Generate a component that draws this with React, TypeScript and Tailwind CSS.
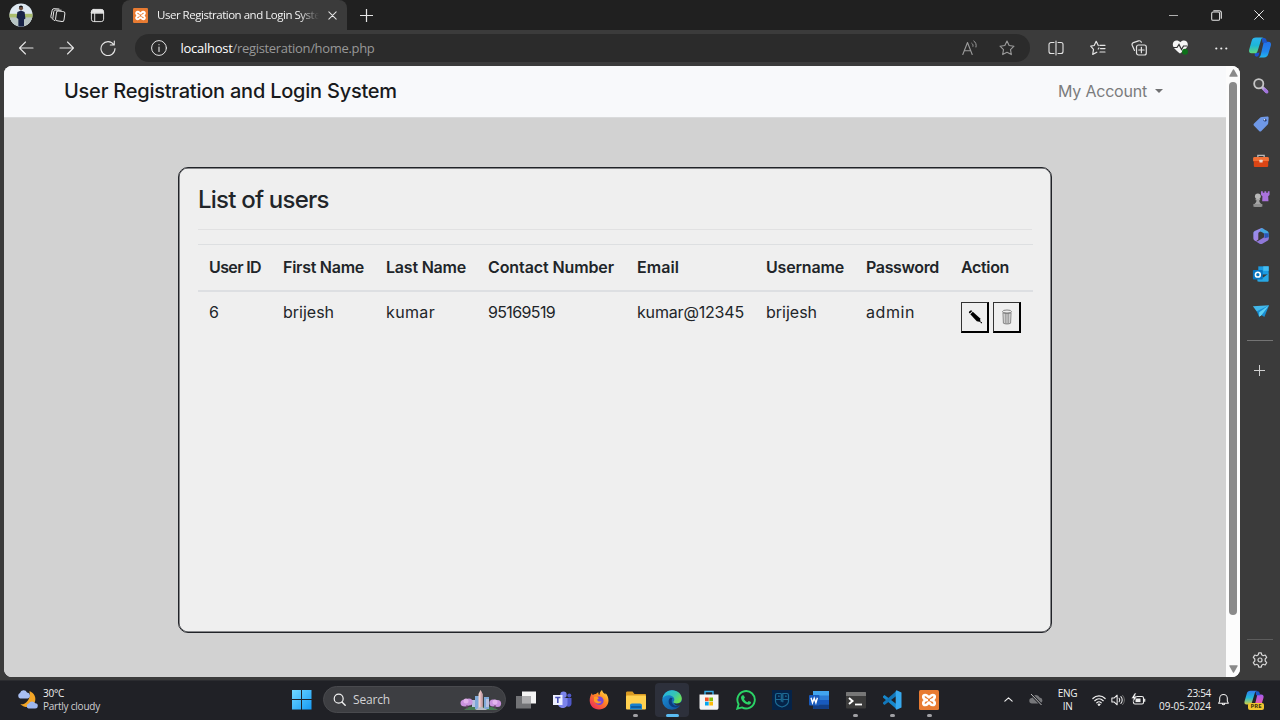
import React from "react";

type SvgProps = { children: React.ReactNode; className?: string; box?: string };

/* Outline glyph drawn on a 16x16 grid */
function Line({ children, className = "size-4", box = "0 0 16 16" }: SvgProps) {
  return (
    <svg viewBox={box} className={`shrink-0 ${className}`} fill="none" stroke="currentColor" strokeWidth="1" strokeLinecap="round" strokeLinejoin="round">
      {children}
    </svg>
  );
}

/* Filled, coloured glyph drawn on a 20x20 grid */
function Art({ children, className = "size-5", box = "0 0 20 20" }: SvgProps) {
  return (
    <svg viewBox={box} className={`shrink-0 ${className}`}>
      {children}
    </svg>
  );
}

function Xampp({ className }: { className: string }) {
  return (
    <Art className={className}>
      <rect width="20" height="20" rx="1.5" fill="#e87b32" />
      <g fill="none" stroke="#fff" strokeWidth="2.7" strokeLinecap="round" strokeLinejoin="round">
        <path d="M7.800 10C3.800 9.500 3 5 6.400 5C8.400 5 9 7.300 10 7.300S11.600 5 13.600 5C17 5 16.200 9.500 12.200 10C16.200 10.500 17 15 13.600 15C11.600 15 11 12.700 10 12.700S8.400 15 6.400 15C3 15 3.800 10.500 7.800 10" />
      </g>
    </Art>
  );
}

function Copilot({ className, warm = false }: { className: string; warm?: boolean }) {
  const a = warm ? "cpw" : "cpb";
  return (
    <Art className={className} box="0 0 24 22">
      <defs>
        <linearGradient id={`${a}l`} x1="0" y1="0" x2="0" y2="1">
          <stop offset="0" stopColor={warm ? "#2f7df0" : "#2db4ee"} />
          <stop offset=".5" stopColor={warm ? "#22b8d8" : "#1cb6d8"} />
          <stop offset="1" stopColor={warm ? "#d5cf3c" : "#5fd77c"} />
        </linearGradient>
        <linearGradient id={`${a}r`} x1="0" y1="0" x2="0" y2="1">
          <stop offset="0" stopColor={warm ? "#a55cf0" : "#2470e8"} />
          <stop offset=".6" stopColor={warm ? "#e35bb0" : "#2185ec"} />
          <stop offset="1" stopColor={warm ? "#f07b62" : "#22b6ee"} />
        </linearGradient>
      </defs>
      <path d="M16 5h4.500c2.500 0 3.500 1.500 2.900 3.900l-2.700 9c-.7 2.300-2 3.600-4.600 3.600H9.500c2 0 2.700-1.300 3.300-3z" fill={`url(#${a}r)`} />
      <path d="M6.500 16.500h5l-1 3c-.6 1.600-3.300 1.600-4 0z" fill="#1b4fd0" />
      <path d="M14 1h2.500c1.400 0 1.900 1 2.300 2.400L19.500 6h-5z" fill="#1d55c8" />
      <path d="M7.800.5H16c-1.800 0-2.500 1.200-3 2.800l-3.400 11C9 16 8.300 17 6.500 17H3.200C.8 17 .1 15.300.7 13l2.600-9C4 1.600 5.300.5 7.800.5z" fill={`url(#${a}l)`} />
    </Art>
  );
}

function TabStrip() {
  return (
    <div className="flex h-[30px] items-stretch bg-[#202020] text-[#e6e6e6]">
      <div className="flex w-[122px] items-center pl-[9px]">
        <Art className="size-6">
          <defs>
            <clipPath id="av"><circle cx="10" cy="10" r="9.600" /></clipPath>
          </defs>
          <g clipPath="url(#av)">
            <rect width="20" height="20" fill="#dde8f1" />
            <rect y="9" width="20" height="5" fill="#a9bd6d" />
            <rect y="12" width="20" height="8" fill="#b8c5c4" />
            <path d="M7 7.500l3-1.200 3 1.200.7 5.500-1.200.7V20H7.800v-6.500L6.300 12z" fill="#172347" />
            <circle cx="10" cy="4.300" r="1.700" fill="#70503f" />
            <path d="M8.300 4c0-2.500 3.400-2.500 3.400 0-1-.9-2.400-.9-3.400 0z" fill="#17171b" />
          </g>
        </Art>
        <Line className="ml-[17px] size-4">
          <rect x="6" y="4.200" width="8.500" height="10" rx="1.800" transform="rotate(8 10 9)" />
          <path d="M4.600 13.500l-1.100-.6c-.7-.4-.8-.9-.7-1.500l1-6.800c.2-1 .8-1.500 1.700-1.500l5.700.1" />
          <path d="M2.200 11.500l-.8-.6c-.6-.5-.7-1-.5-1.600l1.300-6.200c.2-.9.900-1.400 1.800-1.400l5 .3" />
        </Line>
        <Line className="ml-[24px] size-[15px]">
          <rect x="1.500" y="1.500" width="13" height="13" rx="2.500" />
          <path d="M1.500 5.500h13M5 5.500v9" />
          <path d="M3 2h10.500L14.500 5H1.500z" fill="currentColor" />
        </Line>
      </div>
      <div className="flex w-[225px] items-center rounded-t-lg bg-[#3b3b3b] pl-[11px]">
        <Xampp className="size-[15px]" />
        <div className="ml-[9px] w-[162px] overflow-hidden font-['Open_Sans',sans-serif] text-[11.500px] tracking-[-0.480px] whitespace-nowrap text-[#f2f2f2] [mask-image:linear-gradient(90deg,#000_88%,transparent)]">
          User Registration and Login System
        </div>
        <Line className="ml-[9px] size-[9px]">
          <path d="M1.500 1.500l13 13M14.500 1.500l-13 13" strokeWidth="1.800" />
        </Line>
      </div>
      <div className="flex flex-1 items-center pl-[13px]">
        <Line className="size-[13px]">
          <path d="M8 0v16M0 8h16" strokeWidth="1.500" />
        </Line>
      </div>
      <div className="flex items-center pr-[16px]">
        <Line className="size-[9px]"><path d="M0 8h16" strokeWidth="1.300" /></Line>
        <Line className="ml-[33px] size-[11px]">
          <rect x="1" y="3" width="11.500" height="12" rx="2" strokeWidth="1.500" />
          <path d="M4 1h8c2 0 3 1 3 3v8" strokeWidth="1.600" />
        </Line>
        <Line className="ml-[32px] size-[10px]"><path d="M1 1l14 14M15 1L1 15" strokeWidth="1.600" /></Line>
      </div>
    </div>
  );
}

function Toolbar() {
  return (
    <div className="flex h-9 shrink-0 items-center pb-px text-[#e4e4e4]">
      <div className="flex w-[135px] items-center pl-[18px]">
        <Line className="size-4"><path d="M15 8H1.500M7.500 2L1.500 8l6 6" strokeWidth="1.100" /></Line>
        <Line className="ml-[25px] size-4"><path d="M1 8h13.500M8.500 2l6 6-6 6" strokeWidth="1.100" /></Line>
        <Line className="ml-[25px] size-4">
          <path d="M13.800 4.700A7 7 0 1 0 15 8.600M14.300 1v4h-4" strokeWidth="1.100" />
        </Line>
      </div>
      <div className="flex h-7 w-[895px] items-center rounded-full bg-[#2b2b2b] pr-[15px] pl-4">
        <Line className="size-4">
          <circle cx="8" cy="8" r="7.400" />
          <path d="M8 7v4.500M8 4.500v.2" strokeWidth="1.100" />
        </Line>
        <div className="ml-[13.500px] font-['Open_Sans',sans-serif] text-[13px] leading-5 whitespace-nowrap">
          <span className="tracking-[-0.270px] text-white">localhost</span>
          <span className="tracking-[-0.320px] text-[#989898]">/registeration/home.php</span>
        </div>
        <div className="ml-auto flex items-center text-[#9b9b9b]">
          <Line className="size-4">
            <path d="M.8 14.500L5.500 2.500l4.700 12M2.300 10.800h6.400" strokeWidth="1.100" />
            <path d="M9.800 3.300c1 .7 1.400 1.800 1.200 3M11.800 1c2 1.300 2.800 3.500 2.200 6" />
          </Line>
          <Line className="ml-[21px] size-4">
            <path d="M8 1l2.150 4.500 4.850.7-3.500 3.450.85 4.950L8 12.250 3.650 14.600l.85-4.950L1 6.200l4.850-.7z" strokeWidth="1.100" />
          </Line>
        </div>
      </div>
      <div className="flex items-center pl-[18px]">
        <Line className="size-4">
          <path d="M6 2.500H3A2 2 0 0 0 1 4.500v7a2 2 0 0 0 2 2h3M10 2.500h3a2 2 0 0 1 2 2v7a2 2 0 0 1-2 2h-3M8 1v14" strokeWidth="1.100" />
        </Line>
        <Line className="ml-[26px] size-4">
          <path d="M9.800 5.300H15M10.500 8.600H15M10 12h5" strokeWidth="1.200" />
          <path d="M8.300 5.500L6.200 1.300 4.200 5.500.7 6.200l2.800 3.200-.8 5 4.100-2.200M8.200 9l.7-1" strokeWidth="1.200" />
        </Line>
        <Line className="ml-[25px] size-4">
          <rect x="5.500" y="5" width="9.800" height="10" rx="2" strokeWidth="1.200" />
          <path d="M10.400 7.300v5.400M7.700 10h5.400" strokeWidth="1.200" />
          <path d="M3.500 10.500L1.200 5.200C.8 4 1.300 3 2.300 2.600L7.500.9c1.300-.4 2.400.1 2.900 1.300" strokeWidth="1.200" />
        </Line>
        <Art className="ml-[25px] size-[17px]" box="0 0 17 17">
          <path d="M8 14.500C3.500 11 .8 8.500.8 5.300.8 1 6 .3 8.300 3.300 10.500.3 15.800 1 15.800 5.300c0 3.200-3 5.700-7.800 9.200z" fill="#f5f5f5" />
          <path d="M1 8.500h4l2-3 2.500 5 2-3.500h3.500" fill="none" stroke="#333" strokeWidth="1.200" />
          <circle cx="13" cy="12.800" r="3" fill="#0d701a" />
        </Art>
        <Art className="ml-[26px] h-4 w-[14px]" box="0 0 14 16">
          <circle cx="1.300" cy="8.500" r="1.100" fill="#eee" />
          <circle cx="6.300" cy="8.500" r="1.100" fill="#eee" />
          <circle cx="11.300" cy="8.500" r="1.100" fill="#eee" />
        </Art>
      </div>
    </div>
  );
}

function UsersPage() {
  return (
    <div className="ml-1 flex h-[611px] overflow-hidden rounded-lg bg-white">
      <div className="flex w-[1222px] flex-col bg-[#d2d2d2] font-['Inter',sans-serif]">
        <header className="flex h-[52px] items-center border-b border-[#dadbdc] bg-[#f8f9fb] pr-[63px] pb-[2px] pl-[60px]">
          <div className="text-[20px] font-[450] tracking-[-0.230px] text-[#181a1c]">User Registration and Login System</div>
          <div className="ml-auto flex items-center text-[16px] tracking-[-0.210px] text-[#7b7c7d]">
            My Account
            <svg viewBox="0 0 8 4" className="ml-2 h-1 w-2 fill-[#707172]"><path d="M0 0h8L4 4z" /></svg>
          </div>
        </header>
        <main className="mt-[49px] ml-[174px] h-[466px] w-[874px] rounded-[10px] border border-[#212328] bg-[#efefef] px-[19px] pt-[16px] text-[#212529] shadow-[inset_0_0_0_0.5px_#212328]">
          <h1 className="h-[46px] border-b border-[#e1e1e2] text-[24px] leading-8 font-[450] tracking-[-0.780px]">List of users</h1>
          <table className="mt-[14px] w-[835px] table-fixed border-collapse text-left text-[16px] leading-6">
            <colgroup>
              <col className="w-[74px]" />
              <col className="w-[103px]" />
              <col className="w-[102px]" />
              <col className="w-[149px]" />
              <col className="w-[129px]" />
              <col className="w-[100px]" />
              <col className="w-[95px]" />
              <col className="w-[83px]" />
            </colgroup>
            <thead>
              <tr className="h-[46px] border-t border-b-2 border-t-[#dddfe1] border-b-[#dddfe2] whitespace-nowrap [&>th]:pl-[11px] [&>th]:font-semibold">
                <th className="tracking-[-0.620px]">User ID</th>
                <th className="tracking-[-0.260px]">First Name</th>
                <th className="tracking-[-0.210px]">Last Name</th>
                <th className="tracking-[-0.100px]">Contact Number</th>
                <th className="tracking-[0.050px]">Email</th>
                <th className="tracking-[-0.170px]">Username</th>
                <th className="tracking-[-0.360px]">Password</th>
                <th className="tracking-[-0.350px]">Action</th>
              </tr>
            </thead>
            <tbody>
              <tr className="align-top whitespace-nowrap [&>td]:pt-[8px] [&>td]:pl-[11px]">
                <td>6</td>
                <td>brijesh</td>
                <td className="tracking-[0.350px]">kumar</td>
                <td className="tracking-[-0.640px]">95169519</td>
                <td className="tracking-[-0.170px]">kumar@12345</td>
                <td>brijesh</td>
                <td className="tracking-[0.570px]">admin</td>
                <td>
                  <div className="flex gap-1 pt-[2px]">
                    <button className="flex h-[31px] w-7 items-center justify-center border-t border-r-2 border-b-2 border-l border-t-[#333] border-r-black border-b-black border-l-[#333]">
                      <svg viewBox="0 0 16 16" className="size-4">
                        <path d="M2.200 2.600L4 1.200l1.300.9-2.500 2.500-1-1z" />
                        <path d="M5.800 2.700l7.200 6.500.5 3.800-3.700-.8L3.300 5.300z" />
                        <path d="M13 12.500l1 1.700h1v-1z" />
                      </svg>
                    </button>
                    <button className="flex h-[31px] w-7 items-center justify-center border-t border-r-2 border-b-2 border-l border-t-[#333] border-r-black border-b-black border-l-[#333]">
                      <svg viewBox="0 0 12 16" className="h-4 w-3" fill="none" stroke="#777" strokeWidth=".9">
                        <ellipse cx="6" cy="2.500" rx="4.400" ry="1.500" />
                        <path d="M1.600 3.500c1 1.500 7.800 1.500 8.800 0M2 4l.4 10.200c1.500 1 5.700 1 7.200 0L10 4M4.200 5v9.500M6 5v9.800M7.800 5v9.500" />
                      </svg>
                    </button>
                  </div>
                </td>
              </tr>
            </tbody>
          </table>
        </main>
      </div>
      <div className="flex w-[14px] flex-col items-center bg-[#fcfcfc] pt-[3px]">
        <svg viewBox="0 0 9 8" className="h-2 w-[9px] fill-[#8a8a8a]"><path d="M4 .6q.5-.6 1 0l3.700 6.400q.2.700-.6.700H.9Q.1 7.700.3 7z" /></svg>
        <div className="mt-[5px] h-[533px] w-2 rounded-full bg-[#8a8a8a]" />
        <svg viewBox="0 0 9 8" className="mt-auto mb-[4px] h-2 w-[9px] fill-[#8a8a8a]"><path d="M4 7.400q.5.600 1 0L8.700 1q.2-.700-.6-.700H.9Q.1.300.3 1z" /></svg>
      </div>
    </div>
  );
}

function Sidebar() {
  return (
    <aside className="flex w-10 flex-col items-center bg-[#3b3b3b] text-[#d6d6d6]">
      <Copilot className="mt-[7px] h-[21px] w-6" />
      <div className="mt-[19px] ml-px flex flex-col items-center gap-[19.500px]">
        <Art className="size-[18px]">
          <path d="M12 12l4 4" stroke="#b9a4dd" strokeWidth="3.600" strokeLinecap="round" />
          <circle cx="7.500" cy="7.500" r="5.100" fill="#4a4a4a" stroke="#c6c6c6" strokeWidth="2" />
          <path d="M14.500 14.500l2 2" stroke="#a274dd" strokeWidth="3.600" strokeLinecap="round" />
        </Art>
        <Art className="size-[18px]">
          <path d="M10.800 2.200l6.200-.5c1 0 1.500.6 1.500 1.500L18 9.200c0 .7-.3 1.200-.8 1.700L10.400 17.700c-.8.8-1.700.8-2.500 0L2.300 12c-.8-.8-.8-1.700 0-2.500l6.900-6.700c.5-.4 1-.6 1.600-.6z" fill="#6f98e6" />
          <circle cx="14.500" cy="5.700" r="1.600" fill="#20356c" />
          <circle cx="14" cy="5.200" r=".8" fill="#fff" />
        </Art>
        <Art className="size-[18px]">
          <path d="M6.500 6V3.800h7V6" fill="none" stroke="#b9b9b9" strokeWidth="1.500" />
          <rect x="1.200" y="5.500" width="17.600" height="5.200" rx="1.500" fill="#f37036" />
          <path d="M2 10h16v5c0 1.200-.6 1.800-1.800 1.800H3.800C2.600 16.800 2 16.200 2 15z" fill="#da4515" />
          <rect x="8.200" y="8.700" width="3.600" height="3" rx=".6" fill="#e9d5cb" />
        </Art>
        <Art className="size-[18px]">
          <path d="M10 1.500h2v1.500h1.800V1.500h2V3h1.800V1.500h1.900v4l-1.500 1.500.3 5.500h-7L11.600 7 10 5.500z" fill="#aa72dc" />
          <circle cx="6.500" cy="7" r="3.200" fill="#b7b7b7" />
          <path d="M4 10h5v1.500H8c0 2 1 3 2.500 4.500v2.500h-8V16C4 14.500 5 13.500 5 11.500H4z" fill="#a5a5a5" />
          <path d="M1.500 15.500h10v3h-10z" fill="#8f8f8f" />
        </Art>
        <Art className="size-[18px]">
          <defs>
            <linearGradient id="m365" x1="0" y1="0" x2="1" y2="1"><stop stopColor="#8b95f2" /><stop offset="1" stopColor="#b575d9" /></linearGradient>
          </defs>
          <path d="M10.500 1L3 4.500C2 5 1.500 6 1.500 7v5.500c0 1.500 1 2.500 3 3.300L7 14V7.500c0-1 .5-1.800 1.500-2.300L14 2.500z" fill="url(#m365)" />
          <path d="M10.500 1l6.500 3.500c1 .5 1.500 1.300 1.500 2.500v6l-5-2.500V8.300c0-1-.5-1.500-1.300-2L8.500 4.500z" fill="#42a6df" />
          <path d="M18.500 11v2c0 1-.5 1.800-1.400 2.300L11.500 18.500c-1 .5-2 .5-3 0l-4.500-2.700c2 .3 3-.3 4-1l5.500-3.300V8z" fill="#8f78d8" />
          <path d="M13.500 7l5 0v4.500L14 12.500z" fill="#2b56b5" />
        </Art>
        <Art className="size-[18px]">
          <rect x="7" y="1.500" width="11.500" height="9" fill="#1b9be2" />
          <path d="M12.500 1.500h6v5h-6z" fill="#45bdf1" />
          <path d="M6 9l6.500 5 6-4.500v8c0 .7-.4 1-1 1H7.500c-1 0-1.500-.4-1.500-1z" fill="#27a7e4" />
          <rect x="1" y="5.500" width="11" height="10.500" rx="1" fill="#0874bf" />
          <circle cx="6.500" cy="10.700" r="2.700" fill="none" stroke="#fff" strokeWidth="1.700" />
        </Art>
        <Art className="size-[18px]">
          <path d="M1 4.800L19 3.500l-7.500 6L5.300 10.500z" fill="#42b8ea" />
          <path d="M5.300 10.200L19 3.500l-5.300 13.300-3.200-2.300-2.700 2z" fill="#198ed2" />
          <path d="M8 11.500l11-8-8.500 11.200L7.800 16.500z" fill="#5ed0f3" />
        </Art>
      </div>
      <div className="mt-[20px] h-px w-[26px] bg-[#747474]" />
      <Line className="mt-[24px] mr-px size-[11px]"><path d="M8 .5v15M.5 8h15" strokeWidth="1.400" /></Line>
      <div className="mt-auto h-px w-[26px] bg-[#5d5d5d]" />
      <Line className="mt-[12px] mb-[12px] size-4">
        <path d="M6.700.8h2.600l.4 2 1.500.9 2-.7 1.500 2.400L13.200 7v2l1.500 1.600-1.500 2.400-2-.7-1.500.9-.4 2H6.700l-.4-2-1.500-.9-2 .7-1.500-2.400L2.800 9V7L1.300 5.400 2.800 3l2 .7 1.500-.9z" strokeWidth="1.200" />
        <circle cx="8" cy="8" r="2" strokeWidth="1.200" />
      </Line>
    </aside>
  );
}

function TaskCell({ children, mark = "none" }: { children: React.ReactNode; mark?: "none" | "open" | "active" }) {
  return (
    <div className="flex w-[36.670px] justify-center">
      <div className={mark === "active" ? "flex h-[34px] w-[34px] flex-col items-center rounded bg-[#2d303b] pt-[7px]" : "flex h-[34px] w-[34px] flex-col items-center pt-[7px]"}>
        {children}
        {mark === "open" && <div className="mt-[4px] h-[3px] w-[5px] shrink-0 rounded-full bg-[#a0a0a4]" />}
        {mark === "active" && <div className="mt-[4px] h-[3px] w-[13px] shrink-0 rounded-full bg-[#5bbcf3]" />}
      </div>
    </div>
  );
}

function Taskbar() {
  return (
    <footer className="flex h-10 items-center border-t border-[#2b2c30] bg-[#202126] pb-[2px] font-['Open_Sans',sans-serif] text-[10px] leading-[13px] text-[#f1f1f1]">
      <div className="flex w-[291px] items-center pl-4">
        <Art className="size-[22px]" box="0 0 22 22">
          <path d="M13.500 2c5 2 7 7 5.300 11-2 5-8.500 7.300-14.500 2.300C9.500 16 15 11 13.500 2z" fill="#f2a526" />
          <path d="M4 9.500a3 3 0 0 1 0-5.500 3.700 3.700 0 0 1 7-.4 3 3 0 0 1 .7 5.900z" fill="#a9bff2" />
          <path d="M12.500 19.500a2.600 2.600 0 0 1 .3-5 3.700 3.700 0 0 1 6.500-.2 2.600 2.600 0 0 1-.2 5.200z" fill="#9eb7ef" />
        </Art>
        <div className="ml-[5px] whitespace-nowrap">
          <div className="tracking-[-0.250px]">30°C</div>
          <div className="tracking-[-0.230px] text-[#d0d0d2]">Partly cloudy</div>
        </div>
      </div>
      <Art className="size-[21px]" box="0 0 21 21">
        <defs>
          <linearGradient id="win" x1="0" y1="0" x2="1" y2="1"><stop stopColor="#72d8ff" /><stop offset="1" stopColor="#149af4" /></linearGradient>
        </defs>
        <path d="M1 1h9v9H1zM11 1h9.500v9H11zM1 11h9v9.500H1zM11 11h9.500v9.500H11z" fill="url(#win)" />
      </Art>
      <div className="ml-[11px] flex h-[27px] w-[183px] items-center rounded-full border border-[#494a4e] bg-[#3d3e42] pl-[9px]">
        <Line className="size-[13px]"><circle cx="7" cy="7" r="5.500" strokeWidth="1.500" /><path d="M11 11l4 4" strokeWidth="1.700" /></Line>
        <div className="ml-[7px] text-[12px] leading-4 tracking-[-0.170px] text-[#d3d3d5]">Search</div>
        <Art className="mr-[3px] ml-auto h-[22px] w-[42px]" box="0 0 42 22">
          <path d="M4 21c5-5 12-3 16-3s12-2 18 3z" fill="#467a50" />
          <path d="M15 20V7h4v13zM24 20V8h5v12z" fill="#7fa9d8" />
          <path d="M26 10h3v8h-3zM12 11h3v7h-3z" fill="#b8c1e0" />
          <path d="M18.500 20V5l2-4 2 4v15z" fill="#f0d2cd" />
          <path d="M20.500 1l2 4v15h-2z" fill="#cfa3ac" />
          <path d="M15 21l5-3h1.500l6 3z" fill="#b8bcc5" />
          <g fill="#c993dd"><ellipse cx="5" cy="14" rx="4.500" ry="3.500" /><circle cx="9" cy="13" r="3.600" /><circle cx="33" cy="14" r="3.600" /><circle cx="37.500" cy="14.500" r="3.600" /></g>
          <g fill="#e2b4ec"><circle cx="6" cy="12" r="2.500" /><circle cx="35" cy="13" r="2.500" /></g>
          <path d="M7 16v4M35 16v4" stroke="#664263" strokeWidth="1" />
        </Art>
      </div>
      <div className="ml-[1.500px] flex h-[34px] w-[440px]">
        <TaskCell>
          <Art>
            <rect x="6" y="1.500" width="14.500" height="12" fill="#f4f4f4" />
            <rect x="0" y="6" width="15" height="12.500" fill="#7b7c7f" opacity=".9" />
            <rect x="6" y="6" width="9" height="7.500" fill="#aeaeb0" />
          </Art>
        </TaskCell>
        <TaskCell>
          <Art>
            <circle cx="11.500" cy="4.700" r="3.200" fill="#7b83eb" /><circle cx="17.300" cy="5.500" r="2" fill="#5059c9" />
            <path d="M14.500 8h5v6a3 3 0 0 1-5 2z" fill="#5059c9" /><path d="M6 8h9.500v5.500c0 6-9.500 6-9.500 0z" fill="#7b83eb" />
            <rect x="1" y="5" width="9.500" height="10" fill="#eef0ff" /><path d="M3.200 7.500h5.200M5.800 7.500v5.500" stroke="#4850b5" strokeWidth="1.600" />
          </Art>
        </TaskCell>
        <TaskCell>
          <Art>
            <defs><linearGradient id="fx" x1="1" y1="0" x2=".2" y2="1"><stop stopColor="#fff04d" /><stop offset=".45" stopColor="#ff8a22" /><stop offset="1" stopColor="#ed275b" /></linearGradient></defs>
            <path d="M3 3c0 1 .3 1.600.8 2C4.800 4.200 6 3.900 7 4c.5-.8 1.500-1.500 2.500-1.500-.3 1.500 0 2 1 2.500C10.500 3 11.500 1 13 0c.5 2.500 2 3 3.500 4.500 0-.7 0-1-.2-1.500C18.500 5 19.500 7.700 19.500 10.500c0 5-4 9-9.500 9s-9.300-4-9.300-9C.7 7.500 1.700 5 3 3z" fill="url(#fx)" />
            <circle cx="10.300" cy="10.800" r="4.300" fill="#7646d8" /><path d="M5 7c2-1 4 0 5 1.500-1.500.3-2 1-1.500 2 .6 1.200 2.500 1.200 4 .7-1 3-6 3-7.500-.2z" fill="#ff9c25" />
          </Art>
        </TaskCell>
        <TaskCell mark="open">
          <Art>
            <path d="M0 3c0-1 .5-1.500 1.500-1.500h5l2 2.500H19c.7 0 1 .4 1 1v5H0z" fill="#d99a23" />
            <rect y="5.500" width="20" height="14" rx="1" fill="#ffd150" />
            <path d="M4 19.500v-4c0-1.200.8-2 2-2h8c1.200 0 2 .8 2 2v4z" fill="#1780cf" /><path d="M5 17h10" stroke="#0a4d8b" strokeWidth="1.400" />
          </Art>
        </TaskCell>
        <TaskCell mark="active">
          <Art>
            <defs>
              <linearGradient id="eg" x1="0" y1="0" x2="1" y2=".6"><stop stopColor="#23b3e8" /><stop offset=".6" stopColor="#36c5b4" /><stop offset="1" stopColor="#6fe052" /></linearGradient>
              <linearGradient id="eb" x1="0" y1="0" x2="1" y2="1"><stop stopColor="#1b98df" /><stop offset="1" stopColor="#114a93" /></linearGradient>
            </defs>
            <circle cx="10" cy="10" r="9.800" fill="url(#eb)" />
            <path d="M.5 8.500C2 3 5.500.2 10 .2c5.700 0 9.800 4 9.800 8.300 0 3-2.300 5-5.300 5-2 0-3.200-.7-3.200-1.400 0-.5 1-.9 1-2.500C12.300 7 9.500 5.300 6.500 5.300 3.500 5.300 1.500 7 .5 8.500z" fill="url(#eg)" />
            <path d="M8.200 7.800c-3 3-1.500 8.500 3.500 9.500 2.500.4 5-.4 6.500-2-4 2.200-8.700-.3-8.500-4.500 0-1.100.5-1.800 1-2.200-.7-.9-1.600-1.200-2.500-.8z" fill="#0c3b7d" />
            <path d="M12 13c1.500 1.200 5 1 8-1.500v3l-2 1c-3 .6-5.400-.5-6-2.500z" fill="#2d303b" />
          </Art>
        </TaskCell>
        <TaskCell>
          <Art>
            <path d="M6 5V1.500h8V5" fill="none" stroke="#36aeea" strokeWidth="1.400" />
            <path d="M.5 4.500h19v13c0 1.500-.7 2.300-2.200 2.300H2.700C1.200 19.800.5 19 .5 17.500z" fill="#f4f4f4" />
            <path d="M6 7.500h3.700v3.700H6z" fill="#f35325" /><path d="M10.300 7.500H14v3.700h-3.700z" fill="#81bc06" /><path d="M6 11.800h3.700v3.700H6z" fill="#05a6f0" /><path d="M10.300 11.800H14v3.700h-3.700z" fill="#ffba08" />
          </Art>
        </TaskCell>
        <TaskCell>
          <Art>
            <path d="M1.300 18.700l1.300-4.500a8.700 8.700 0 1 1 3.300 3.200z" fill="none" stroke="#2bd366" strokeWidth="1.900" />
            <path d="M6.800 5.200l1.100.2 1 2.300-1 1.300c1 1.700 2 2.500 3.600 3.200l1.200-1.300 2.300 1.100c.1 2-1.500 2.800-3 2.600C8.500 14 5.500 11 5 8c-.1-1.200.7-2.600 1.800-2.800z" fill="#2bd366" />
          </Art>
        </TaskCell>
        <TaskCell>
          <Art>
            <rect width="20" height="20" fill="#052348" />
            <path d="M9.300 3.500H5.200C4 3.500 3.500 4 3.500 5.200v6C3.500 14 6 15.800 10 17c4-1.200 6.500-3 6.500-5.800v-6c0-1.200-.5-1.700-1.700-1.700h-4v8.800M9.300 3.500v8.200M3.700 9.500h5.500M11 9.500h5.500M6 6h1v1M13 6h1v1" fill="none" stroke="#1d6b94" strokeWidth="1.200" />
          </Art>
        </TaskCell>
        <TaskCell>
          <Art>
            <rect x="4" y="1" width="16" height="18" rx="1" fill="#2b7cd3" />
            <path d="M4 1h16v4.500H4z" fill="#41a5ee" /><path d="M4 10h16v4.500H4z" fill="#185abd" /><path d="M4 14.500h16V18c0 .7-.3 1-1 1H5c-.7 0-1-.3-1-1z" fill="#123f86" />
            <rect y="5" width="10.500" height="10.500" rx="1" fill="#185abd" />
            <path d="M2 7.800l1.500 5 1.700-4.500 1.700 4.500 1.500-5" fill="none" stroke="#fff" strokeWidth="1.400" />
          </Art>
        </TaskCell>
        <TaskCell mark="open">
          <Art>
            <rect y="2" width="20" height="16.500" rx="1" fill="#3b3b3b" /><path d="M0 6V3c0-.7.3-1 1-1h18c.7 0 1 .3 1 1v3z" fill="#777" />
            <path d="M3 8l3.500 3L3 14" fill="none" stroke="#fff" strokeWidth="2" /><path d="M9 14.500h7" stroke="#fff" strokeWidth="1.800" />
          </Art>
        </TaskCell>
        <TaskCell mark="open">
          <Art>
            <path d="M1 6.200l1.500-1.300L15 14.500V19.500L1 7.500z" fill="#1688cc" /><path d="M1 13.800l1.500 1.300L15 5.500V.5L1 12.500z" fill="#1277ba" />
            <path d="M14.500.3L19.500 2.500v15l-5 2.200-.8-1V1.500z" fill="#37a9ee" />
          </Art>
        </TaskCell>
        <TaskCell mark="open"><Xampp className="size-5" /></TaskCell>
      </div>
      <div className="ml-[56px] flex flex-1 items-center">
        <Line className="size-[9px]"><path d="M1.500 11L8 5l6.500 6" strokeWidth="2" /></Line>
        <Art className="ml-[16px] h-[13px] w-[14px]" box="0 0 14 13">
          <path d="M3 10.500a2.700 2.700 0 0 1 0-5.400 4 4 0 0 1 7.600-.5 3 3 0 0 1 .6 5.900z" fill="#76777a" /><path d="M2 1l10.500 11" stroke="#202126" strokeWidth="2.600" /><path d="M2 1l10.500 11" stroke="#bbb" strokeWidth="1" />
        </Art>
        <div className="ml-[10px] w-[30px] text-center tracking-[-0.350px]"><div>ENG</div><div>IN</div></div>
        <Line className="ml-[9px] size-[14px]">
          <path d="M1 6.300c4-4 10-4 14 0M3.200 8.800c2.800-2.800 6.800-2.800 9.600 0M5.500 11.200c1.500-1.500 3.500-1.500 5 0" strokeWidth="1.400" /><circle cx="8" cy="13.300" r="1" fill="currentColor" />
        </Line>
        <Line className="ml-[5px] size-[14px]">
          <path d="M1 5.800h2.500L7 2.500v11l-3.500-3.300H1z" strokeWidth="1.200" /><path d="M9.300 6c1 1.200 1 2.800 0 4M11.300 4.200c2 2 2 5.600 0 7.600" strokeWidth="1.200" /><path d="M13.300 2.800c2.700 3 2.700 7.400 0 10.400" stroke="#777" strokeWidth="1.100" />
        </Line>
        <Art className="ml-[6px] h-[13px] w-[15px]" box="0 0 15 13">
          <rect x="2.500" y="3.500" width="10" height="7.500" rx="1.500" fill="none" stroke="#eee" strokeWidth="1.100" /><path d="M4.500 5.500h5v3.600h-5z" fill="#eee" /><path d="M13.700 5.800v3" stroke="#eee" strokeWidth="1.200" />
          <path d="M3.700 0L.3 5.500h2.500L1.500 9.500 6 4H3.600L5.300 0z" fill="#fff" stroke="#202126" strokeWidth=".5" />
        </Art>
        <div className="ml-auto text-right"><div className="tracking-[-0.300px]">23:54</div><div className="tracking-[-0.020px]">09-05-2024</div></div>
        <Line className="ml-[6px] size-[13px]">
          <path d="M2 12.500L3.300 10V6.500a4.700 4.700 0 0 1 9.400 0V10l1.300 2.500zM6.300 12.700c0 2.500 3.400 2.500 3.400 0" strokeWidth="1.300" />
        </Line>
        <div className="relative mr-[16px] ml-[14px] h-[20px] w-5">
          <Copilot className="h-[19px] w-5" warm />
          <div className="absolute top-[13px] left-1 h-[7px] w-4 rounded-[2px] bg-[#f0c52f] text-center font-['Open_Sans',sans-serif] text-[6px] leading-[7px] font-bold text-[#3d300c]">PRE</div>
        </div>
      </div>
    </footer>
  );
}

export default function App() {
  return (
    <div className="flex h-[720px] w-[1280px] flex-col overflow-hidden bg-[#3b3b3b]">
      <TabStrip />
      <div className="flex h-[650px]">
        <div className="flex w-[1240px] flex-col">
          <Toolbar />
          <UsersPage />
        </div>
        <Sidebar />
      </div>
      <Taskbar />
    </div>
  );
}
